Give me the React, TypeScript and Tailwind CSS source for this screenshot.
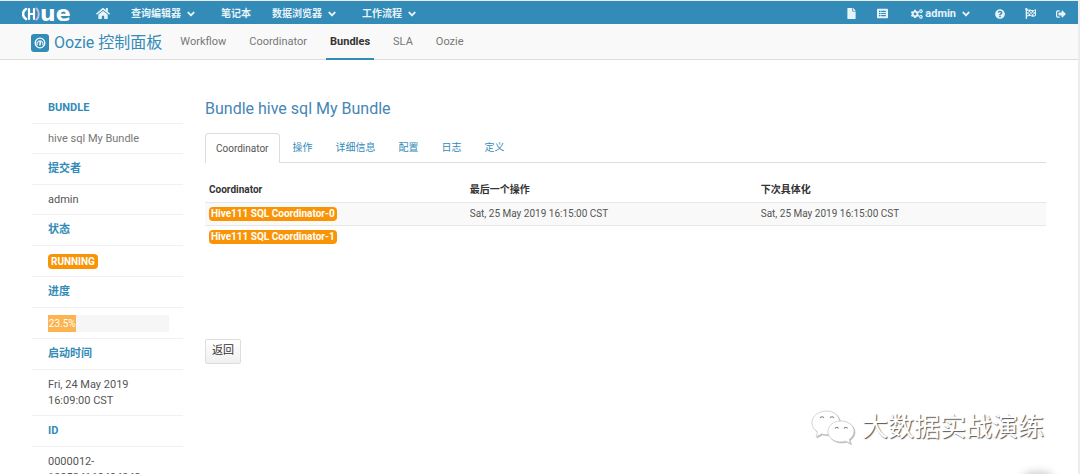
import React from 'react'
import { FaAngleDown, FaCogs, FaFile, FaFlagCheckered, FaHome, FaListAlt, FaQuestionCircle, FaSignOutAlt } from 'react-icons/fa'

const font = "font-['Roboto','Noto_Sans_CJK_SC',sans-serif]"

function TopBar() {
  return (
    <header className="flex h-[23px] items-center bg-[#338bb8] pl-[22px] pr-3 pt-0.5 text-[10px] font-bold text-[#e6f3f9]">
      <a href="#" className="flex w-[50px] items-center text-white" aria-label="Hue">
        <svg width="18" height="14" viewBox="0 0 18 14" fill="none" strokeLinecap="round">
          <path d="M4 2C0 4.500 0 9.500 4 12" stroke="#fff" strokeWidth="2.600" />
          <path d="M7 2v10M7 7h5M12 2v10" stroke="#fff" strokeWidth="2.200" />
          <path d="M14.500 1.500c3 2.500 3 8.500 0 11" stroke="#d4b5e6" strokeWidth="2" />
        </svg>
        <span className="font-['DejaVu_Sans',sans-serif] text-[22px] leading-[21px]">ue</span>
      </a>
      <nav className="ml-6 flex items-center">
        <a href="#" aria-label="Home"><FaHome className="h-[13px] w-[14px]" /></a>
        <button className="ml-[21px] flex items-center gap-1 font-bold">查询编辑器 <FaAngleDown className="size-3" /></button>
        <a href="#" className="ml-6">笔记本</a>
        <button className="ml-[21px] flex items-center gap-1 font-bold">数据浏览器 <FaAngleDown className="size-3" /></button>
        <button className="ml-6 flex items-center gap-1 font-bold">工作流程 <FaAngleDown className="size-3" /></button>
      </nav>
      <div className="ml-auto flex items-center">
        <a href="#" aria-label="Documents"><FaFile className="size-[11px]" /></a>
        <a href="#" aria-label="Jobs" className="ml-5"><FaListAlt className="size-[11px]" /></a>
        <button className="ml-[23px] flex items-center gap-0.5 font-bold">
          <FaCogs className="size-3" />
          <span className="text-[11px] leading-4">admin</span>
          <FaAngleDown className="ml-0.5 size-3" />
        </button>
        <a href="#" aria-label="Help" className="ml-[23px]"><FaQuestionCircle className="size-[10px]" /></a>
        <a href="#" aria-label="Tour" className="ml-5"><FaFlagCheckered className="size-[11px]" /></a>
        <a href="#" aria-label="Sign out" className="ml-5"><FaSignOutAlt className="size-[10px]" /></a>
      </div>
    </header>
  )
}

function SubBar() {
  return (
    <div className="flex h-9 items-center border-b border-[#dcdcdc] bg-[#f9f9f9] pl-[31px] text-[11px] text-[#777]">
      <a href="#" className="flex items-center gap-[5px] pt-0.5 text-base text-[#338bb8]">
        <svg width="18" height="18" viewBox="0 0 18 18" fill="none">
          <rect width="18" height="18" rx="3" fill="#338bb8" />
          <circle cx="9" cy="9" r="4.800" stroke="#fff" strokeWidth="1.300" />
          <path d="M6.300 11.300a3 3 0 1 1 5.400 0" stroke="#d8ebf4" strokeWidth="1.300" />
          <path d="M9.300 7.500 8.900 11.500" stroke="#fff" strokeWidth="1.500" />
        </svg>
        Oozie 控制面板
      </a>
      <nav className="ml-[18px] flex h-9 items-center">
        <a href="#" className="pt-0.5">Workflow</a>
        <a href="#" className="ml-[23px] pt-0.5">Coordinator</a>
        <a href="#" className="ml-[19px] flex h-9 items-center border-b-2 border-[#338bb8] px-1 pt-1 font-bold text-[#333]">Bundles</a>
        <a href="#" className="ml-[19px] pt-0.5">SLA</a>
        <a href="#" className="ml-[23px] pt-0.5">Oozie</a>
      </nav>
    </div>
  )
}

function Label({ children }: { children: React.ReactNode }) {
  return <dt className="border-b border-[#f1f1f1] px-4 py-[7px] font-bold text-[#338bb8]">{children}</dt>
}

function Value({ children }: { children: React.ReactNode }) {
  return <dd className="border-b border-[#f1f1f1] px-4 pb-1.5 pt-[7px]">{children}</dd>
}

function Sidebar() {
  return (
    <aside className="w-[151px] shrink-0">
      <dl className="text-[11px] leading-4 text-[#555]">
        <Label>BUNDLE</Label>
        <Value><span className="text-[#777]">hive sql My Bundle</span></Value>
        <Label>提交者</Label>
        <Value>admin</Value>
        <Label>状态</Label>
        <Value>
          <span className="my-px block w-fit rounded-sm bg-[#f89406] px-[3px] text-[10px] font-bold leading-[15px] text-white">RUNNING</span>
        </Value>
        <Label>进度</Label>
        <Value>
          <div className="w-[121px] bg-[#f6f6f6]">
            <div className="bg-[#fbb450] text-center text-[10px] leading-[17px] text-white" style={{ width: '23.5%' }}>23.5%</div>
          </div>
        </Value>
        <Label>启动时间</Label>
        <Value>Fri, 24 May 2019<br />16:09:00 CST</Value>
        <Label>ID</Label>
        <Value>0000012-<br />190524160404943-</Value>
      </dl>
    </aside>
  )
}

const tabs = ['操作', '详细信息', '配置', '日志', '定义']

const rows = [
  { name: 'Hive111 SQL Coordinator-0', last: 'Sat, 25 May 2019 16:15:00 CST', next: 'Sat, 25 May 2019 16:15:00 CST' },
  { name: 'Hive111 SQL Coordinator-1', last: '', next: '' },
]

function BundleDetail() {
  return (
    <main className="ml-[22px] mr-8 min-w-0 flex-1 text-[11px] text-[#555]">
      <h1 className="pt-1 text-base leading-6 text-[#4586b5]">Bundle hive sql My Bundle</h1>
      <nav className="mt-3 flex h-[30px] items-stretch border-b border-[#ddd] text-[10px] text-[#338bb8]">
        <button className="-mb-px rounded-t-sm border border-b-0 border-[#ddd] bg-white px-[10px] text-[#555]">Coordinator</button>
        {tabs.map((tab) => (
          <button key={tab} className="ml-[3px] px-[10px]">{tab}</button>
        ))}
      </nav>
      <table className="mt-[15px] w-full table-fixed text-left text-[10px]">
        <thead>
          <tr className="h-6 text-[#333]">
            <th className="w-[31%] px-1">Coordinator</th>
            <th className="w-[34.6%] px-1">最后一个操作</th>
            <th className="px-1">下次具体化</th>
          </tr>
        </thead>
        <tbody>
          {rows.map((row) => (
            <tr key={row.name} className="h-[23px] border-t border-[#e8e8e8] odd:bg-[#f9f9f9]">
              <td className="px-1">
                <a href="#" className="block w-fit rounded-sm bg-[#f89406] px-0.5 font-bold leading-[14px] text-white">{row.name}</a>
              </td>
              <td className="px-1">{row.last}</td>
              <td className="px-1">{row.next}</td>
            </tr>
          ))}
        </tbody>
      </table>
      <button className="mt-[91px] h-[25px] rounded-xs border border-[#ddd] bg-linear-to-b from-white to-[#f0f0f0] px-1.5 text-[#333]">返回</button>
    </main>
  )
}

function Watermark() {
  return (
    <div className="absolute bottom-7 right-[34px] flex items-center gap-1.5">
      <svg width="46" height="38" viewBox="0 0 46 38" fill="#fff" stroke="#bbb" strokeWidth="0.600" className="drop-shadow-[1px_1px_0px_#bbb]">
        <path d="M17 3C8.500 3 2 8 2 14.500c0 4 2 7.300 5.500 9.500L6 29l5.500-3c2 .6 4 .8 6.500.7C35 26 33 3 17 3z" />
        <path d="M31 13c-7.500 0-13 4.500-13 10.500S23.500 34 31 34c1.700 0 3.300-.3 4.800-.8l4.700 2.500-1.300-4.200c3-2 4.800-4.800 4.800-8C44 17.500 38.500 13 31 13z" />
        <path d="M10 10q2-2.500 4 0M20 10q2-2.500 4 0M25 20.500q1.800-2.500 3.600 0M34 20.500q1.800-2.500 3.600 0" fill="none" stroke="#888" strokeWidth="1.100" />
      </svg>
      <span className="text-[26px] leading-9 text-white [text-shadow:1px_1px_1px_#555]">大数据实战演练</span>
    </div>
  )
}

export default function App() {
  return (
    <div className={`${font} relative h-screen overflow-hidden border-r-2 border-t border-[#ececec] bg-white`}>
      <TopBar />
      <SubBar />
      <div className="flex pl-8 pt-[33px]">
        <Sidebar />
        <BundleDetail />
      </div>
      <Watermark />
      <div className="absolute -bottom-[18px] right-6 h-5 w-8 rounded-full bg-[#ccc] blur-xs" />
    </div>
  )
}
